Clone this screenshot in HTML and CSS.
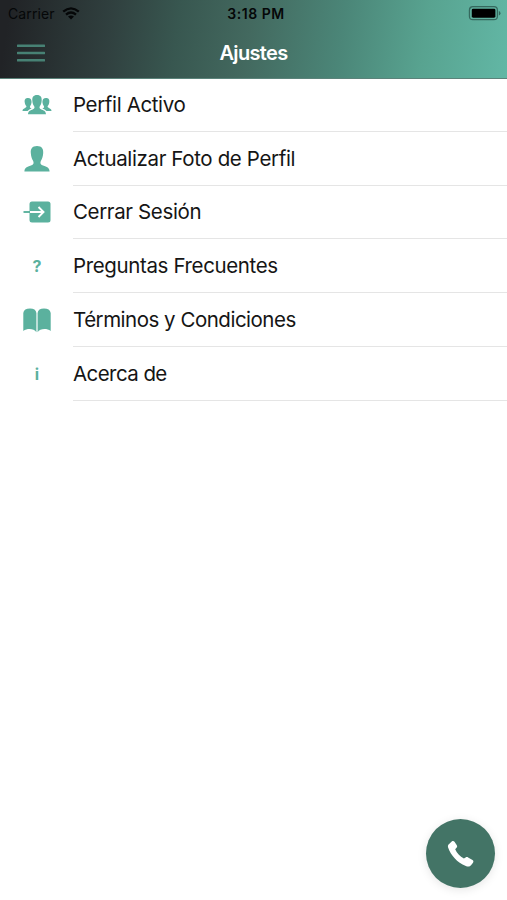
FILE: index.html
```html
<!DOCTYPE html>
<html lang="es">
<head>
<meta charset="utf-8">
<meta name="viewport" content="width=device-width, initial-scale=1">
<title>Ajustes</title>
<link rel="stylesheet" href="styles.css">
</head>
<body>
<header class="header">
  <div class="status">
    <div class="carrier"><span>Carrier</span>
      <svg width="18" height="13" viewBox="0 0 18 13" fill="none" stroke="#050708" stroke-width="2.3"><path d="M1.200 4.700Q9-2 16.800 4.700M4 7.600Q9 3.500 14 7.600"/><path d="M9 12.400 6 9.500Q9 7.300 12 9.500Z" fill="#050708" stroke="none"/></svg>
    </div>
    <time class="time">3:18 PM</time>
    <svg class="battery" width="33" height="15" viewBox="0 0 33 15"><rect x="1.400" y=".7" width="28" height="13" rx="3.500" fill="none" stroke="#35695e" stroke-width="1.200"/><rect x="3.800" y="2.700" width="23.600" height="9" rx="1.400" fill="#000"/><path d="M30.800 5v4.500q1.700-.6 1.700-2.250T30.800 5Z" fill="#35695e"/></svg>
  </div>
  <div class="navbar">
    <button class="menu" aria-label="Menú"><svg width="28" height="18" viewBox="0 0 28 18"><path d="M.8 1.800h26.400M.8 9h26.400M.8 16.200h26.400" stroke="#478174" stroke-width="2.400" stroke-linecap="round"/></svg></button>
    <h1 class="title">Ajustes</h1>
  </div>
</header>
<main class="list">
  <a class="row"><span class="icon"><svg width="30" height="20" viewBox="0 0 30 20"><path d="M6 3C2.700 3 2.500 5.400 2.700 7.300c.2 2 1.100 3.100 1.600 3.800.5 1.100-.4 1.700-2 2.300C.8 14 .6 14.600.5 16h5.100c1.100-1.500 2.400-2 4-2.600-1.500-.5-2.100-1.100-1.500-2.100C9 10 9.500 8.500 9.600 7 9.600 4.500 8.500 3 6 3ZM24 3c3.300 0 3.500 2.400 3.300 4.300-.2 2-1.100 3.100-1.600 3.800-.5 1.100.4 1.700 2 2.300 1.500.6 1.700 1.200 1.800 2.600h-5.100c-1.100-1.500-2.400-2-4-2.600 1.500-.5 2.100-1.100 1.500-2.100-.9-1.300-1.400-2.800-1.500-4.300C20.400 4.500 21.500 3 24 3Z"/><path class="front" d="M15 0c-3.700 0-4.900 2.300-4.700 5.200.1 3 1 4.800 1.900 6 .8 1.700.1 2.700-2.100 3.500C7.500 15.600 6.300 16.100 6 19.300h18c-.3-3.200-1.500-3.700-4.100-4.600-2.200-.8-2.900-1.800-2.100-3.500.9-1.200 1.800-3 1.900-6C19.900 2.300 18.700 0 15 0Z"/></svg></span><span class="label">Perfil Activo</span></a>
  <a class="row"><span class="icon"><svg width="26" height="26" viewBox="0 0 26 26"><path d="M13 0C8.200 0 6.500 2.800 6.800 6.900c.2 4.200 1.500 6.600 2.400 8.200.8 2.300.5 3.500-2.200 4.500C2.800 21.200.8 21.600.4 25.500h25.200c-.4-3.900-2.400-4.300-6.600-5.900-2.700-1-3-2.200-2.200-4.500.9-1.600 2.200-4 2.400-8.200C19.500 2.800 17.800 0 13 0Z"/></svg></span><span class="label">Actualizar Foto de Perfil</span></a>
  <a class="row"><span class="icon"><svg width="28" height="22" viewBox="0 0 28 22"><rect x="6.500" y=".5" width="21" height="21" rx="2.500"/><path d="M7 11h13.500M15.500 6l5 5-5 5" fill="none" stroke="#fff" stroke-width="1.900"/><path d="M.5 11H7" stroke="#5bb19e" stroke-width="1.900"/></svg></span><span class="label">Cerrar Sesión</span></a>
  <a class="row"><span class="icon glyph">?</span><span class="label">Preguntas Frecuentes</span></a>
  <a class="row"><span class="icon"><svg width="28" height="25" viewBox="0 0 28 25"><path d="M.3 5C.7 2 3.200.6 7 .6S13 2 13.400 5v19.300C11.100 20.500 4.400 20 .3 23ZM27.700 5C27.300 2 24.800.6 21 .6S15 2 14.600 5v19.300c2.300-3.800 9-4.300 13.100-1.300Z"/></svg></span><span class="label terms">Términos y Condiciones</span></a>
  <a class="row"><span class="icon glyph">i</span><span class="label about">Acerca de</span></a>
</main>
<button class="call" aria-label="Llamar"><svg width="28" height="28" viewBox="0 0 28 28"><path d="M2.100 3.900 5 1.300c.9-.7 1.900-.4 2.500.5l2.300 3.400c.6 1 .4 1.900-.3 2.600L8.200 9.300c1.500 3.600 4.800 7.200 8.700 9.300l1.700-1.100c.8-.6 1.700-.6 2.500-.1l4.400 2.700c1 .7 1.200 1.600.5 2.600l-2 2.600c-1.200 1.500-3.200 1.500-5.200.7C10.100 22.600 3.700 15.200 1.200 7.800.7 6.200.8 5 2.100 3.900Z" fill="#fff"/></svg></button>
</body>
</html>
```
FILE: styles.css
```css
* { box-sizing: border-box; }
body { margin: 0; height: 900px; overflow: hidden; background: #fff; font-family: Inter, "Liberation Sans", sans-serif; color: #151515; }
button { padding: 0; border: 0; background: none; }
svg { display: block; flex: none; }
.header { height: 79px; background: linear-gradient(98deg, #212326 2%, #30403f 22%, #385750 35%, #43695f 49%, #4b8678 67%, #58a390 83%, #62b7a5 100%); border-bottom: 1px solid #5b837a; }
.status { height: 27px; display: grid; grid-template-columns: 1fr auto 1fr; align-items: center; padding: 0 6px 0 8px; color: #050708; }
.carrier { display: flex; align-items: center; gap: 7px; font-size: 14px; letter-spacing: .1px; }
.time { font-size: 14px; font-weight: 600; letter-spacing: .55px; padding-left: 3px; }
.battery { justify-self: end; }
.navbar { height: 51px; display: grid; grid-template-columns: 60px 1fr 60px; align-items: center; }
.menu { width: 28px; margin-left: 17px; }
.title { margin: 0; color: #fff; font-size: 20px; font-weight: 600; letter-spacing: -.65px; text-align: center; }
.list { margin-top: -1px; }
.row { height: 53.800px; display: grid; grid-template-columns: 73px 1fr; }
.icon { display: flex; align-items: center; justify-content: center; fill: #5bb19e; color: #5bb19e; padding-left: 1px; }
.front { stroke: #fff; stroke-width: 1px; paint-order: stroke; }
.glyph { font-size: 16px; font-weight: 700; }
.label { display: flex; align-items: center; border-bottom: 1px solid #e5e5e5; font-size: 20.500px; letter-spacing: -.37px; white-space: nowrap; }
.terms { letter-spacing: -.49px; }
.about { letter-spacing: -.57px; }
.call { position: fixed; right: 12px; bottom: 12px; width: 69px; height: 69px; border-radius: 50%; background: #437466; display: flex; align-items: center; justify-content: center; box-shadow: 0 2px 10px rgba(0,0,0,.1); }
```
